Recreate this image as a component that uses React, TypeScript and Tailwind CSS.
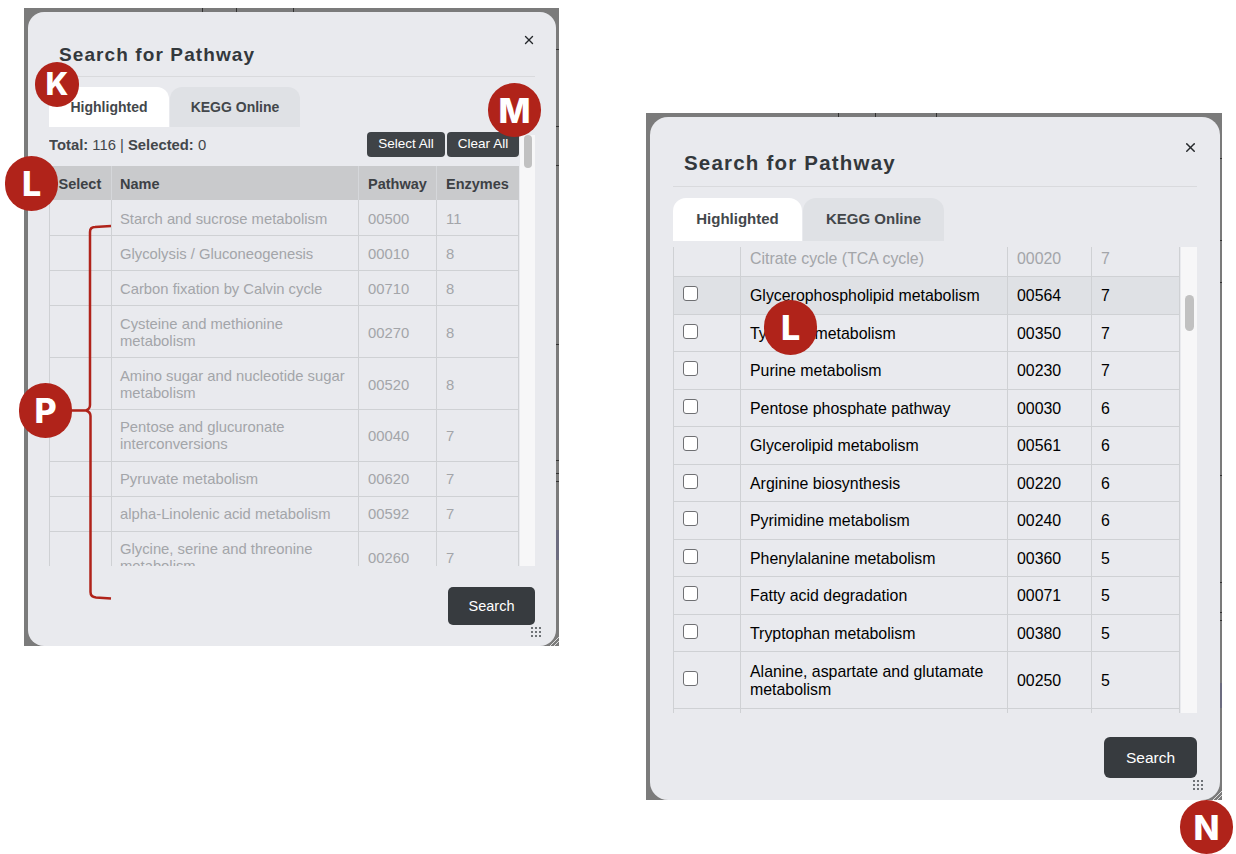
import { X } from 'lucide-react';

type Row = { name: string; pathway: string; enzymes: string; h: string; muted?: boolean; hover?: boolean; box?: boolean };

const leftRows: Row[] = [
  { name: 'Starch and sucrose metabolism', pathway: '00500', enzymes: '11', h: 'h-[35px]' },
  { name: 'Glycolysis / Gluconeogenesis', pathway: '00010', enzymes: '8', h: 'h-[35px]' },
  { name: 'Carbon fixation by Calvin cycle', pathway: '00710', enzymes: '8', h: 'h-[35px]' },
  { name: 'Cysteine and methionine metabolism', pathway: '00270', enzymes: '8', h: 'h-[52px]' },
  { name: 'Amino sugar and nucleotide sugar metabolism', pathway: '00520', enzymes: '8', h: 'h-[52px]' },
  { name: 'Pentose and glucuronate interconversions', pathway: '00040', enzymes: '7', h: 'h-[52px]' },
  { name: 'Pyruvate metabolism', pathway: '00620', enzymes: '7', h: 'h-[35px]' },
  { name: 'alpha-Linolenic acid metabolism', pathway: '00592', enzymes: '7', h: 'h-[35px]' },
  { name: 'Glycine, serine and threonine metabolism', pathway: '00260', enzymes: '7', h: 'h-[52px]' },
];

const rightRows: Row[] = [
  { name: 'Citrate cycle (TCA cycle)', pathway: '00020', enzymes: '7', h: 'h-[29px]', muted: true },
  { name: 'Glycerophospholipid metabolism', pathway: '00564', enzymes: '7', h: 'h-[38px]', box: true, hover: true },
  { name: 'Tyrosine metabolism', pathway: '00350', enzymes: '7', h: 'h-[37px]', box: true },
  { name: 'Purine metabolism', pathway: '00230', enzymes: '7', h: 'h-[38px]', box: true },
  { name: 'Pentose phosphate pathway', pathway: '00030', enzymes: '6', h: 'h-[37px]', box: true },
  { name: 'Glycerolipid metabolism', pathway: '00561', enzymes: '6', h: 'h-[38px]', box: true },
  { name: 'Arginine biosynthesis', pathway: '00220', enzymes: '6', h: 'h-[37px]', box: true },
  { name: 'Pyrimidine metabolism', pathway: '00240', enzymes: '6', h: 'h-[38px]', box: true },
  { name: 'Phenylalanine metabolism', pathway: '00360', enzymes: '5', h: 'h-[37px]', box: true },
  { name: 'Fatty acid degradation', pathway: '00071', enzymes: '5', h: 'h-[38px]', box: true },
  { name: 'Tryptophan metabolism', pathway: '00380', enzymes: '5', h: 'h-[37px]', box: true },
  { name: 'Alanine, aspartate and glutamate metabolism', pathway: '00250', enzymes: '5', h: 'h-[57px]', box: true },
  { name: '', pathway: '', enzymes: '', h: 'h-[5px]' },
];

function Badge({ letter, className }: { letter: string; className: string }) {
  return (
    <div
      className={`absolute flex items-center justify-center rounded-full bg-[#b0231a] font-['Inter',sans-serif] font-extrabold text-white ${className}`}
    >
      {letter}
    </div>
  );
}

function Grip({ className }: { className: string }) {
  return (
    <div className={`absolute grid grid-cols-3 gap-[2px] ${className}`}>
      {Array.from({ length: 9 }).map((_, i) => (
        <span key={i} className="h-[2px] w-[2px] bg-[#6f7377]" />
      ))}
    </div>
  );
}

// bits of the dimmed page showing through the backdrop around the dialog
function Backdrop({ top, side, block, blockH }: { top: number[]; side: number[]; block: number; blockH: number }) {
  return (
    <>
      {top.map((x) => (
        <span key={x} className="absolute top-0 h-1 w-px bg-[#333333]" style={{ left: x }} />
      ))}
      {side.map((y) => (
        <span key={y} className="absolute right-0 h-px w-[3px] bg-[#333333]" style={{ top: y }} />
      ))}
      <span className="absolute right-0 w-[3px] bg-[#6c6c80]" style={{ top: block, height: blockH }} />
      <svg className="absolute bottom-0 right-0" width="10" height="10" viewBox="0 0 10 10" fill="none">
        <path d="M1 10 L10 1 M5 10 L10 5" stroke="#dddddd" strokeWidth="1" />
      </svg>
    </>
  );
}

function LeftTable() {
  return (
    <table className="w-[470px] table-fixed border-collapse text-[14.8px] leading-[17px] text-[#a3a5a9]">
      <colgroup>
        <col className="w-[62px]" />
        <col className="w-[247px]" />
        <col className="w-[78px]" />
        <col />
      </colgroup>
      <thead>
        <tr className="h-[34px] bg-[#c9cacc] text-left text-[14.5px] font-bold text-[#3d4145]">
          <th className="border-r border-[#d5d7da] pl-[9px] pt-[3px]">Select</th>
          <th className="border-r border-[#d5d7da] pl-2 pt-[3px]">Name</th>
          <th className="border-r border-[#d5d7da] pl-[9px] pt-[3px]">Pathway</th>
          <th className="pl-[9px] pt-[3px]">Enzymes</th>
        </tr>
      </thead>
      <tbody>
        {leftRows.map((r, i) => {
          const pad = i < 5 ? 'pt-[4px]' : 'pt-[2px]';
          return (
            <tr key={r.pathway} className={`${r.h} border-b border-[#cfd1d4]`}>
              <td className="border-x border-[#cfd1d4]" />
              <td className={`border-r border-[#cfd1d4] pl-2 pr-3 ${pad}`}>{r.name}</td>
              <td className={`border-r border-[#cfd1d4] pl-[9px] ${pad}`}>{r.pathway}</td>
              <td className={`border-r border-[#cfd1d4] pl-[9px] ${pad}`}>{r.enzymes}</td>
            </tr>
          );
        })}
      </tbody>
    </table>
  );
}

function RightTable() {
  return (
    <table className="w-[507px] table-fixed border-collapse text-[15.9px] leading-[18px] text-black">
      <colgroup>
        <col className="w-[67px]" />
        <col className="w-[267px]" />
        <col className="w-[84px]" />
        <col />
      </colgroup>
      <tbody>
        {rightRows.map((r, i) => (
          <tr
            key={i}
            className={`${r.h} ${i < rightRows.length - 1 ? 'border-b' : ''} border-[#cfd1d4] ${r.hover ? 'bg-[#dfe1e5]' : ''} ${r.muted ? 'text-[#a3a5a9]' : ''}`}
          >
            <td className="border-x border-[#cfd1d4] pl-[9px] leading-none">
              {r.box && (
                <span className="mb-[3px] block h-[15px] w-[15px] rounded-[3px] border border-[#6f7073] bg-white" />
              )}
            </td>
            <td className={`border-r border-[#cfd1d4] pl-[9px] pr-3 ${r.muted ? 'pb-[5px]' : 'pt-[2px]'}`}>{r.name}</td>
            <td className={`border-r border-[#cfd1d4] pl-[9px] ${r.muted ? 'pb-[5px]' : 'pt-[2px]'}`}>{r.pathway}</td>
            <td className={`border-r border-[#cfd1d4] pl-[9px] ${r.muted ? 'pb-[5px]' : 'pt-[2px]'}`}>{r.enzymes}</td>
          </tr>
        ))}
      </tbody>
    </table>
  );
}

export default function App() {
  return (
    <div className="relative h-[854px] w-[1236px] overflow-hidden bg-white font-['Liberation_Sans',Arial,sans-serif]">
      {/* left window */}
      <div className="absolute left-[24px] top-[8px] h-[638px] w-[535px] bg-[#7b7b7b] pl-1 pr-[3px] pt-1">
        <Backdrop top={[178, 212, 269]} side={[41, 118, 157, 336, 452, 465, 473]} block={522} blockH={30} />
        <div className="relative flex h-[634px] w-[528px] flex-col rounded-[16px] bg-[#e9eaee] pl-[21px] pr-[21px] pt-[32px]">
          <div className="flex h-[33px] items-start justify-between border-b border-[#d9dadd] pl-[10px]">
            <h2 className="text-[19px] font-bold leading-[22px] tracking-[1.1px] text-[#33383c]">Search for Pathway</h2>
            <X className="mr-[-1px] mt-[-11px] h-[14px] w-[14px] text-[#25282b]" strokeWidth={2.4} />
          </div>
          <div className="mt-[10px] flex h-[40px] gap-px text-[14px] font-bold">
            <div className="flex w-[120px] items-center justify-center rounded-t-[12px] bg-white text-[#43474b]">Highlighted</div>
            <div className="flex w-[130px] items-center justify-center rounded-t-[12px] bg-[#dfe1e5] text-[#43474b]">KEGG Online</div>
          </div>
          <div className="relative flex h-[439px] flex-col overflow-hidden">
            <div className="flex h-[39px] w-[470px] shrink-0 items-start justify-between pt-[5px]">
              <div className="pt-[5px] text-[14.8px] leading-4 text-[#43474b]">
                <b>Total:</b> 116 | <b>Selected:</b> 0
              </div>
              <div className="flex gap-[2px] text-[13.5px] text-white">
                <button className="h-[25px] w-[78px] rounded-[4px] bg-[#3f4347]">Select All</button>
                <button className="h-[25px] w-[72px] rounded-[4px] bg-[#3f4347]">Clear All</button>
              </div>
            </div>
            <LeftTable />
            <div className="absolute bottom-0 right-0 top-[8px] w-[15px] bg-[#f7f7f8]" />
            <div className="absolute right-[3px] top-[8px] h-[33px] w-2 rounded-full bg-[#c1c1c1]" />
          </div>
          <div className="mt-[21px] flex justify-end">
            <button className="h-[38px] w-[87px] rounded-[5px] bg-[#373b3f] pt-px text-[14.5px] text-white">Search</button>
          </div>
        </div>
        <Grip className="left-[507px] top-[619px]" />
      </div>

      {/* right window */}
      <div className="absolute left-[646px] top-[113px] h-[687px] w-[576px] bg-[#7b7b7b] pl-1 pr-[2px] pt-1">
        <Backdrop top={[192, 229, 290]} side={[45, 127, 169, 362, 469, 499, 507]} block={570} blockH={25} />
        <div className="relative flex h-[683px] w-[570px] flex-col rounded-[18px] bg-[#e9eaee] pl-[23px] pr-[23px] pt-[34px]">
          <div className="flex h-[36px] items-start justify-between border-b border-[#d9dadd] pl-[11px]">
            <h2 className="text-[20.5px] font-bold leading-6 tracking-[1.2px] text-[#33383c]">Search for Pathway</h2>
            <X className="mr-[-1px] mt-[-11px] h-[15px] w-[15px] text-[#25282b]" strokeWidth={2.4} />
          </div>
          <div className="mt-[11px] flex h-[43px] gap-px text-[15px] font-bold">
            <div className="flex w-[129px] items-center justify-center rounded-t-[13px] bg-white text-[#43474b]">Highlighted</div>
            <div className="flex w-[141px] items-center justify-center rounded-t-[13px] bg-[#dfe1e5] text-[#43474b]">KEGG Online</div>
          </div>
          <div className="relative mt-[6px] h-[466px] overflow-hidden">
            <RightTable />
            <div className="absolute bottom-0 right-0 top-0 w-[16px] bg-[#f7f7f8]" />
            <div className="absolute right-[3px] top-[48px] h-[36px] w-[9px] rounded-full bg-[#c1c1c1]" />
          </div>
          <div className="mt-[24px] flex justify-end">
            <button className="h-[41px] w-[93px] rounded-[6px] bg-[#373b3f] text-[15.5px] text-white">Search</button>
          </div>
        </div>
        <Grip className="left-[547px] top-[667px]" />
      </div>

      {/* annotation bracket */}
      <svg className="absolute left-[70px] top-[220px]" width="46" height="385" viewBox="0 0 46 385" fill="none">
        <path
          d="M41 6 L25 7 Q20 7 20 12 L20 185 Q20 189 16 190.5 L2 190.5 M16 190.5 Q20.5 192 20.5 196 L20.5 372 Q20.5 377 26 377.5 L41 378.5"
          stroke="#b0231a"
          strokeWidth="2.5"
        />
      </svg>

      <Badge letter="K" className="left-[35px] top-[62px] h-[45px] w-[44px] text-[31px]" />
      <Badge letter="L" className="left-[5px] top-[156px] h-[55px] w-[53px] text-[34px]" />
      <Badge letter="M" className="left-[488px] top-[83px] h-[54px] w-[53px] text-[34px]" />
      <Badge letter="P" className="left-[19px] top-[383px] h-[55px] w-[53px] text-[34px]" />
      <Badge letter="L" className="left-[764px] top-[300px] h-[55px] w-[53px] text-[34px]" />
      <Badge letter="N" className="left-[1180px] top-[800px] h-[54px] w-[53px] text-[34px]" />
    </div>
  );
}
